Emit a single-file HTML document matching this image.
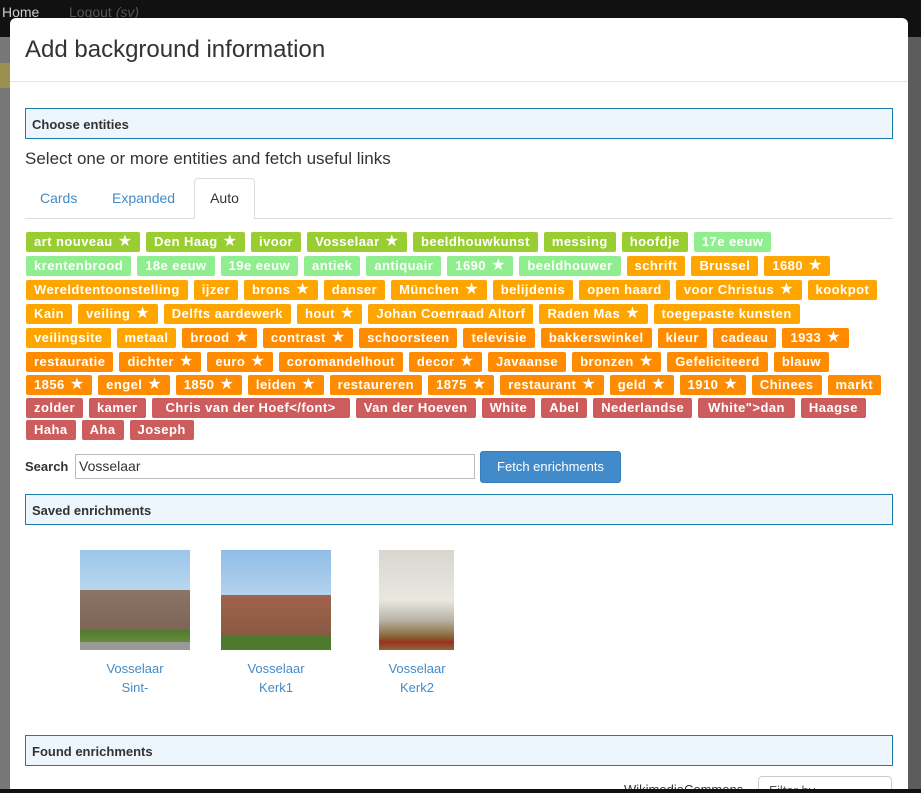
<!DOCTYPE html>
<html><head><meta charset="utf-8">
<style>
*{box-sizing:border-box;margin:0;padding:0}
html,body{width:921px;height:793px;overflow:hidden}
body{background:#6f6f6f;font-family:"Liberation Sans",Arial,sans-serif;position:relative;color:#333}
.nav{position:absolute;left:0;top:0;width:921px;height:37px;background:#111}
.nav span{position:absolute;top:4px;font-size:14px;color:#555}
.modal{position:absolute;left:10px;top:18px;width:898px;height:775px;background:#fff;border-radius:6px 6px 0 0;overflow:hidden}
.abs{position:absolute}
.panel{position:absolute;left:15px;width:868px;height:31px;background:#eef6fd;border:1px solid #1e7aaa;font-size:13px;font-weight:bold;padding:8px 6px;color:#333}
.row{position:absolute;left:16px;display:flex;gap:6px}
.l{height:20px;line-height:20px;padding:0 8px;font-size:13px;font-weight:bold;color:#fff;border-radius:2px;white-space:nowrap;letter-spacing:0.45px}
.l b{font-size:16px;margin-left:1px;font-weight:normal;letter-spacing:0}
.g{background:#9acd32}.lg{background:#90ee90}.o{background:#ffa500}.d{background:#ff8c00}.r{background:#cd5c5c}
.cap{position:absolute;color:#428bca;font-size:13px;text-align:center;line-height:19px;width:120px}
</style></head><body>
<div class="nav"><span style="left:2px;color:#ccc;top:4px">Home</span><span style="left:69px">Logout <i>(sv)</i></span></div>
<div class="abs" style="left:0;top:37px;width:10px;height:760px;background:#777"></div>
<div class="abs" style="left:0;top:63px;width:10px;height:25px;background:#9a9050"></div>
<div class="abs" style="left:908px;top:37px;width:13px;height:760px;background:#5c5c5c"></div>
<div class="modal">
 <div class="abs" style="left:15px;top:18px;font-size:24px;color:#333">Add background information</div>
 <div class="abs" style="left:0;top:63px;width:898px;height:1px;background:#e5e5e5"></div>
 <div class="panel" style="top:90px">Choose entities</div>
 <div class="abs" style="left:15px;top:131px;font-size:17px;color:#333">Select one or more entities and fetch useful links</div>
 <div class="abs" style="left:15px;top:200px;width:868px;height:1px;background:#ddd"></div>
 <div class="abs" style="left:30px;top:172px;font-size:14px;color:#428bca">Cards</div>
 <div class="abs" style="left:102px;top:172px;font-size:14px;color:#428bca">Expanded</div>
 <div class="abs" style="left:184px;top:160px;width:61px;height:41px;border:1px solid #ddd;border-bottom:none;background:#fff;border-radius:4px 4px 0 0;font-size:14px;padding-top:11px;text-align:center">Auto</div>

 <div class="row" style="top:214px"><span class="l g">art nouveau <b>★</b></span><span class="l g">Den Haag <b>★</b></span><span class="l g">ivoor</span><span class="l g">Vosselaar <b>★</b></span><span class="l g">beeldhouwkunst</span><span class="l g">messing</span><span class="l g">hoofdje</span><span class="l lg">17e eeuw</span></div>
 <div class="row" style="top:238px"><span class="l lg">krentenbrood</span><span class="l lg">18e eeuw</span><span class="l lg">19e eeuw</span><span class="l lg">antiek</span><span class="l lg">antiquair</span><span class="l lg">1690 <b>★</b></span><span class="l lg">beeldhouwer</span><span class="l o">schrift</span><span class="l o">Brussel</span><span class="l o">1680 <b>★</b></span></div>
 <div class="row" style="top:262px"><span class="l o">Wereldtentoonstelling</span><span class="l o">ijzer</span><span class="l o">brons <b>★</b></span><span class="l o">danser</span><span class="l o">München <b>★</b></span><span class="l o">belijdenis</span><span class="l o">open haard</span><span class="l o">voor Christus <b>★</b></span><span class="l o">kookpot</span></div>
 <div class="row" style="top:286px"><span class="l o">Kain</span><span class="l o">veiling <b>★</b></span><span class="l o">Delfts aardewerk</span><span class="l o">hout <b>★</b></span><span class="l o">Johan Coenraad Altorf</span><span class="l o">Raden Mas <b>★</b></span><span class="l o">toegepaste kunsten</span></div>
 <div class="row" style="top:310px"><span class="l o">veilingsite</span><span class="l o">metaal</span><span class="l d">brood <b>★</b></span><span class="l d">contrast <b>★</b></span><span class="l d">schoorsteen</span><span class="l d">televisie</span><span class="l d">bakkerswinkel</span><span class="l d">kleur</span><span class="l d">cadeau</span><span class="l d">1933 <b>★</b></span></div>
 <div class="row" style="top:334px"><span class="l d">restauratie</span><span class="l d">dichter <b>★</b></span><span class="l d">euro <b>★</b></span><span class="l d">coromandelhout</span><span class="l d">decor <b>★</b></span><span class="l d">Javaanse</span><span class="l d">bronzen <b>★</b></span><span class="l d">Gefeliciteerd</span><span class="l d">blauw</span></div>
 <div class="row" style="top:357px"><span class="l d">1856 <b>★</b></span><span class="l d">engel <b>★</b></span><span class="l d">1850 <b>★</b></span><span class="l d">leiden <b>★</b></span><span class="l d">restaureren</span><span class="l d">1875 <b>★</b></span><span class="l d">restaurant <b>★</b></span><span class="l d">geld <b>★</b></span><span class="l d">1910 <b>★</b></span><span class="l d">Chinees</span><span class="l d">markt</span></div>
 <div class="row" style="top:380px"><span class="l r">zolder</span><span class="l r">kamer</span><span class="l r" style="padding:0 14px">Chris van der Hoef&lt;/font&gt;</span><span class="l r">Van der Hoeven</span><span class="l r">White</span><span class="l r">Abel</span><span class="l r">Nederlandse</span><span class="l r" style="padding:0 10px">White"&gt;dan</span><span class="l r">Haagse</span></div>
 <div class="row" style="top:402px"><span class="l r">Haha</span><span class="l r">Aha</span><span class="l r">Joseph</span></div>

 <div class="abs" style="left:15px;top:441px;font-size:13px;font-weight:bold">Search</div>
 <div class="abs" style="left:65px;top:436px;width:400px;height:25px;border:1px solid #bbb;font-size:14px;padding:3px 3px">Vosselaar</div>
 <div class="abs" style="left:470px;top:433px;width:141px;height:32px;background:#428bca;border:1px solid #357ebd;border-radius:3px;color:#fff;font-size:13px;text-align:center;line-height:30px">Fetch enrichments</div>

 <div class="panel" style="top:476px">Saved enrichments</div>
 <div class="abs" style="left:70px;top:532px;width:110px;height:100px;background:linear-gradient(#9cc6ea 0,#b8d6ee 40%,#8d7466 40%,#7d6558 80%,#4e7a30 80%,#6a8a3a 92%,#999 92%)"></div>
 <div class="abs" style="left:211px;top:532px;width:110px;height:100px;background:linear-gradient(#8fbde6 0,#b3d2ee 45%,#a0624a 45%,#8a5a44 85%,#4d7a2c 85%)"></div>
 <div class="abs" style="left:369px;top:532px;width:75px;height:100px;background:linear-gradient(#d8d6cf,#e9e7e0 50%,#b8b4a8 70%,#8a6a3a 86%,#9a3020 92%,#8a6a3a)"></div>
 <div class="cap" style="left:65px;top:641px">Vosselaar<br>Sint-</div>
 <div class="cap" style="left:206px;top:641px">Vosselaar<br>Kerk1</div>
 <div class="cap" style="left:347px;top:641px">Vosselaar<br>Kerk2</div>

 <div class="panel" style="top:717px">Found enrichments</div>
 <div class="abs" style="left:614px;top:764px;font-size:13px">WikimediaCommons</div>
 <div class="abs" style="left:748px;top:758px;width:134px;height:30px;border:1px solid #ccc;border-radius:4px;font-size:13px;padding:6px 10px;color:#555">Filter by</div>
</div>
<div class="abs" style="left:0;top:789px;width:921px;height:4px;background:#111"></div>
</body></html>
